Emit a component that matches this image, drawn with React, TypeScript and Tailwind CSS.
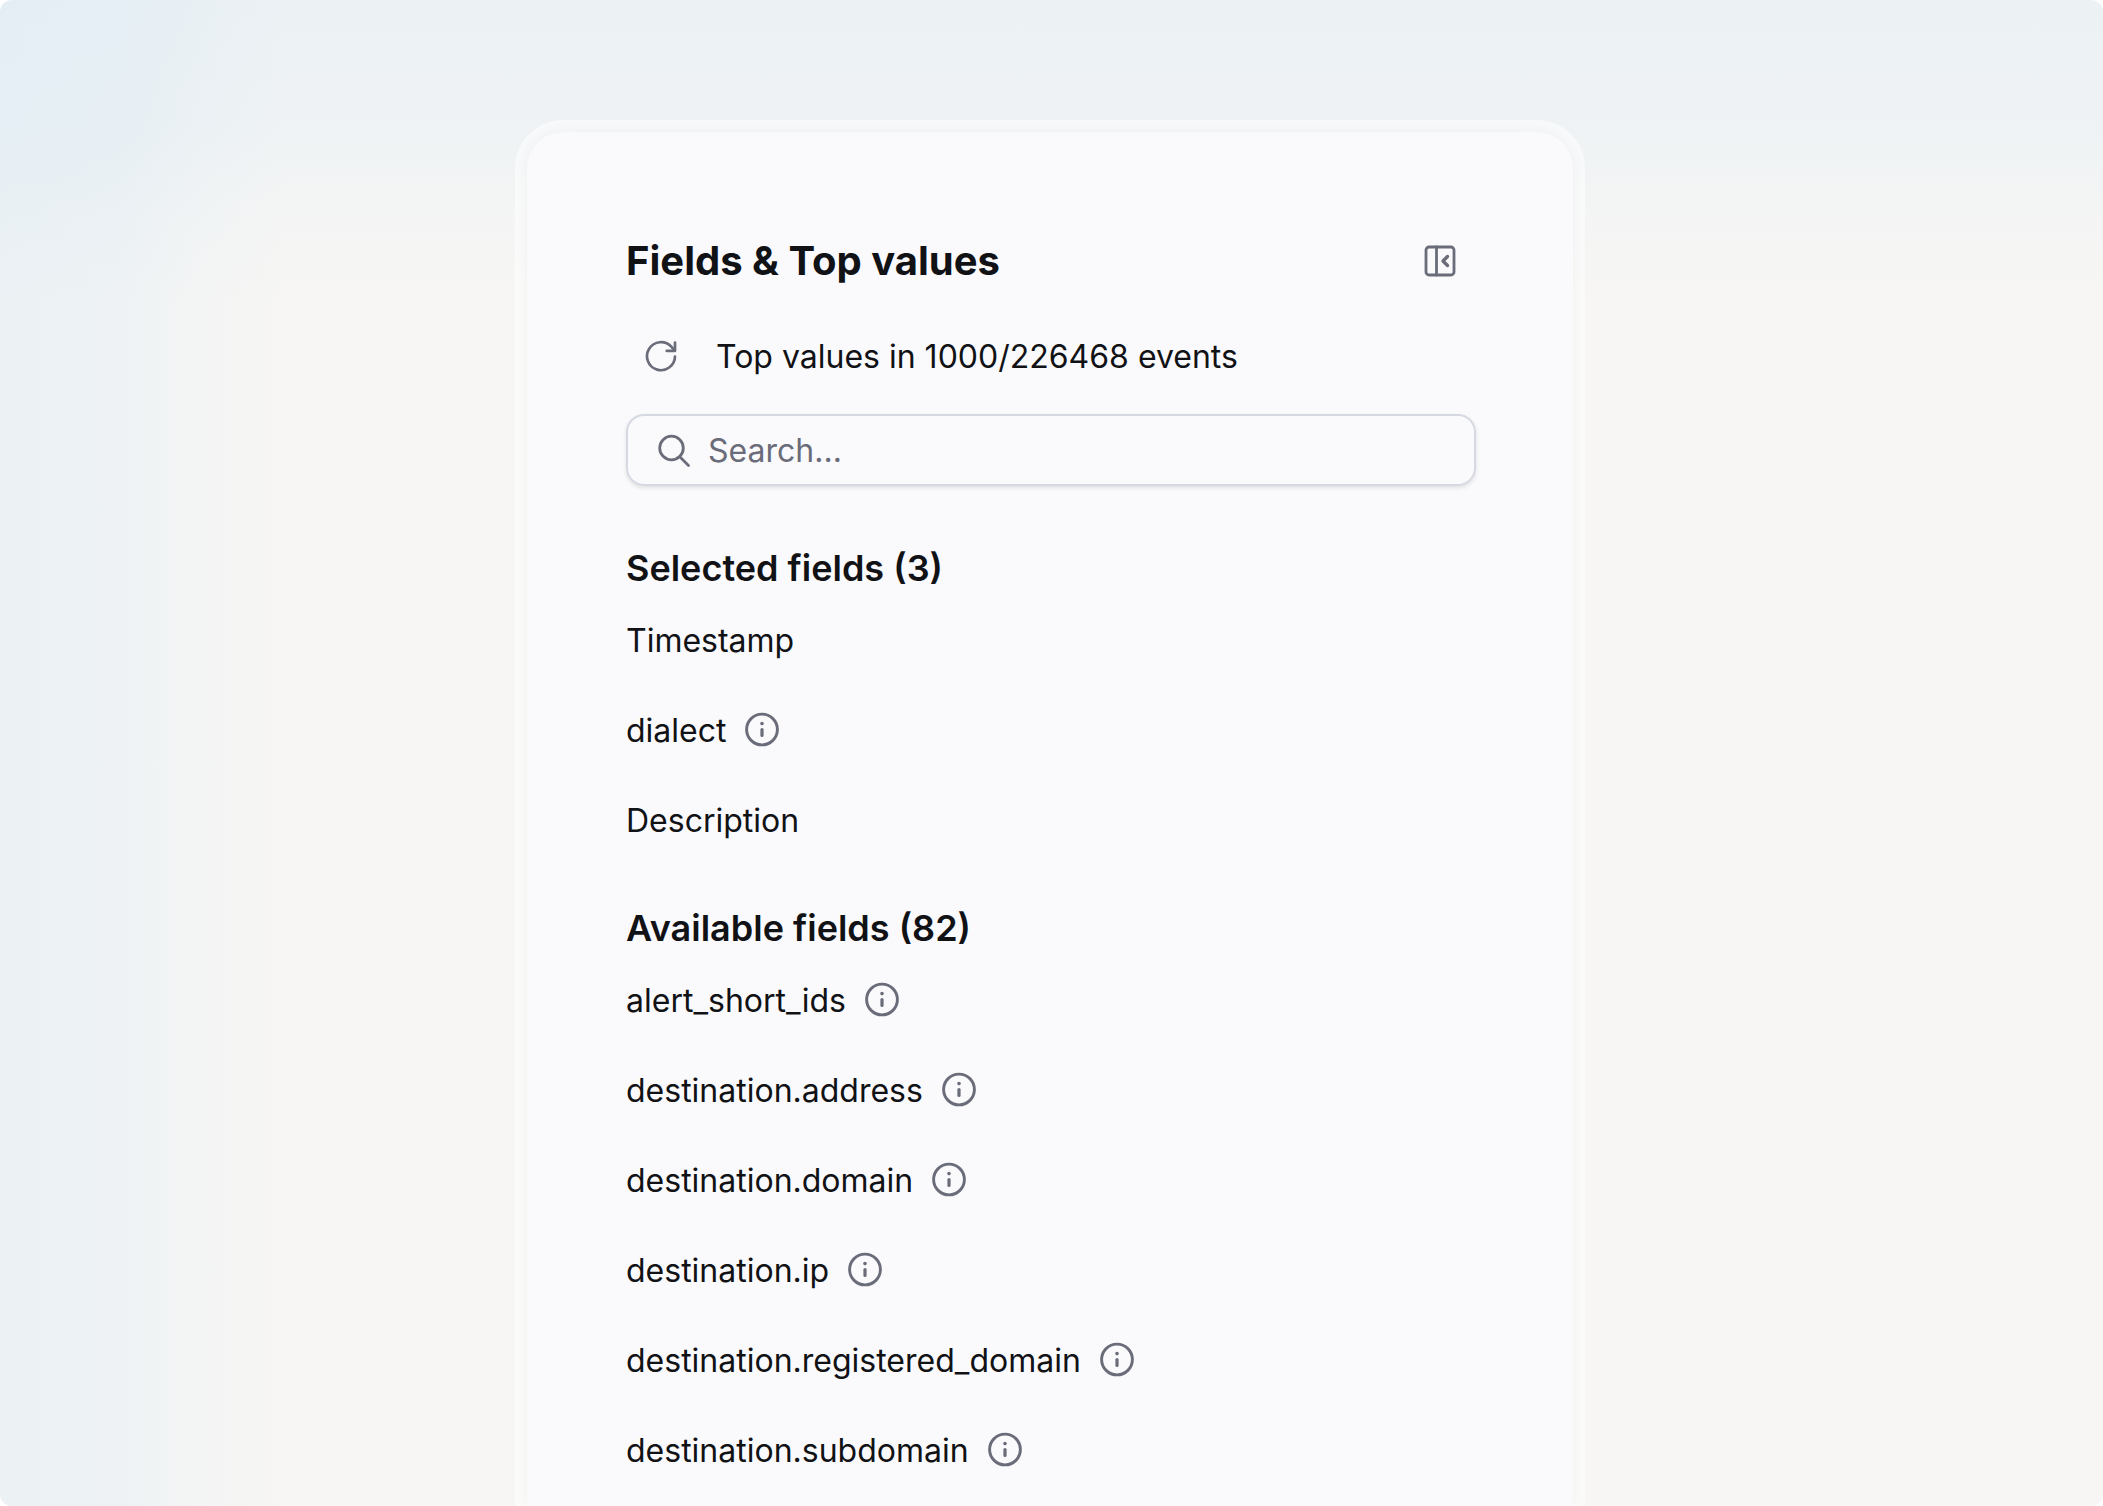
import { useState } from "react";

type Field = { name: string; hasInfo: boolean };

const SELECTED_FIELDS: Field[] = [
  { name: "Timestamp", hasInfo: false },
  { name: "dialect", hasInfo: true },
  { name: "Description", hasInfo: false },
];

const AVAILABLE_FIELDS: Field[] = [
  { name: "alert_short_ids", hasInfo: true },
  { name: "destination.address", hasInfo: true },
  { name: "destination.domain", hasInfo: true },
  { name: "destination.ip", hasInfo: true },
  { name: "destination.registered_domain", hasInfo: true },
  { name: "destination.subdomain", hasInfo: true },
];

const iconProps = {
  viewBox: "0 0 36 36",
  fill: "none",
  stroke: "currentColor",
  strokeLinecap: "round",
  strokeLinejoin: "round",
  "aria-hidden": true,
} as const;

function CollapseIcon() {
  return (
    <svg {...iconProps} strokeWidth={2.8} className="size-9">
      <rect x="4" y="4" width="28" height="28" rx="3" />
      <path d="M14.5 4v28" />
      <path d="M25.5 13.5 21 18l4.5 4.5" strokeWidth={3.4} />
    </svg>
  );
}

function RefreshIcon() {
  return (
    <svg {...iconProps} strokeWidth={2.7} className="size-9">
      <path d="M31 18.5A14 14 0 1 1 27.3 8.7L30.5 12.5" />
      <path d="M31 4.5v8.3h-8.3" />
    </svg>
  );
}

function SearchIcon() {
  return (
    <svg {...iconProps} strokeWidth={2.8} className="size-9 shrink-0">
      <circle cx="15.5" cy="16" r="11.8" />
      <path d="M24 25l8.5 8.5" />
    </svg>
  );
}

function InfoIcon() {
  return (
    <svg {...iconProps} strokeWidth={2.9} className="size-9">
      <circle cx="18" cy="17.5" r="15.4" />
      <path d="M18 17.5v6" strokeWidth={3.2} />
      <circle cx="18" cy="11.6" r="1.8" fill="currentColor" stroke="none" />
    </svg>
  );
}

function FieldSection({ title, count, fields }: { title: string; count: number; fields: Field[] }) {
  return (
    <section>
      <h2 className="text-4xl leading-[54px] font-semibold">
        {title} ({count})
      </h2>
      <ul>
        {fields.map((field) => (
          <li key={field.name} className="flex h-[90px] items-center gap-[18px]">
            <span className="pt-0.5">{field.name}</span>
            {field.hasInfo && (
              <button type="button" aria-label={`About ${field.name}`} className="text-[#6a6c79]">
                <InfoIcon />
              </button>
            )}
          </li>
        ))}
      </ul>
    </section>
  );
}

export default function App() {
  const [query, setQuery] = useState("");
  const matches = (field: Field) => field.name.toLowerCase().includes(query.toLowerCase());

  return (
    <div className="bg-white font-['Inter',sans-serif] text-[32px] leading-10 text-[#111215]">
      <main className="flex min-h-screen flex-col rounded-xl bg-[#f7f6f4] bg-[linear-gradient(to_right,#cde4f544_0,#cde4f538_120px,#cde4f518_200px,#cde4f500_285px),linear-gradient(to_bottom,#cde4f544_0,#cde4f533_130px,#cde4f516_210px,#cde4f500_300px)] pt-[120px] pr-[27px] pl-6">
        <div className="mx-auto flex w-full max-w-[1070px] flex-1 flex-col rounded-t-[48px] bg-white/50 px-3 pt-3">
          <aside className="flex-1 rounded-t-[36px] bg-[#fafafd] pt-24 pr-[97px] pl-[99px] shadow-[0_0_14px_#0000000c]">
            <header className="flex h-[66px] items-center justify-between pr-[18px]">
              <h1 className="text-[40px] leading-[52px] font-bold">Fields &amp; Top values</h1>
              <button type="button" aria-label="Collapse panel" className="text-[#6a6c79]">
                <CollapseIcon />
              </button>
            </header>

            <div className="mt-5 flex h-[84px] items-center gap-9 pl-[18px]">
              <button type="button" aria-label="Refresh top values" className="text-[#6a6c79]">
                <RefreshIcon />
              </button>
              <p className="pt-0.5">Top values in 1000/226468 events</p>
            </div>

            <label className="mt-4 mb-[55px] flex h-[72px] items-center gap-4 rounded-[18px] border-2 border-[#d6d9e1] px-7 text-[#6a6c79] shadow-[0_2px_4px_#0000001a]">
              <SearchIcon />
              <input
                type="text"
                aria-label="Search fields"
                placeholder="Search..."
                value={query}
                onChange={(e) => setQuery(e.target.value)}
                className="w-full min-w-0 bg-transparent pt-0.5 outline-none placeholder:text-[#6a6c79]"
              />
            </label>

            <div className="flex flex-col gap-9">
              <FieldSection title="Selected fields" count={3} fields={SELECTED_FIELDS.filter(matches)} />
              <FieldSection title="Available fields" count={82} fields={AVAILABLE_FIELDS.filter(matches)} />
            </div>
          </aside>
        </div>
      </main>
    </div>
  );
}
